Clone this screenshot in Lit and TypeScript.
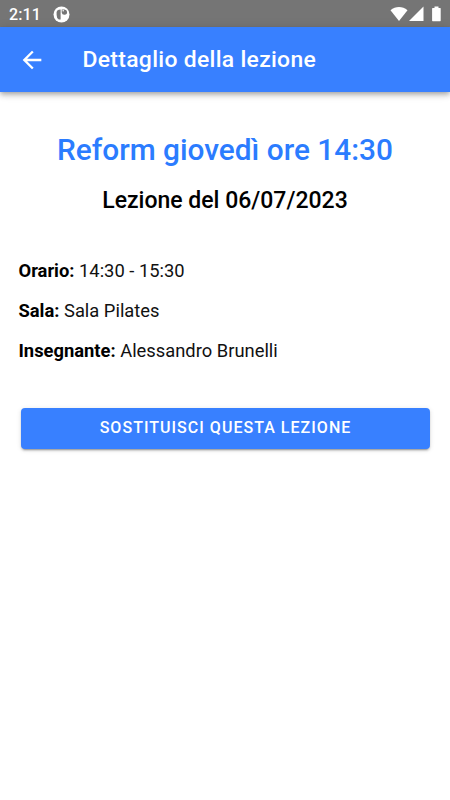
import { LitElement, html, css } from "lit";
import { customElement } from "lit/decorators.js";

@customElement("app-root")
export class AppRoot extends LitElement {
  static styles = css`
    :host { display: block; height: 800px; background: #fff; font-family: Roboto, sans-serif; color: #000; overflow: hidden; }
    * { box-sizing: border-box; }
    .status { height: 27px; background: #757575; color: #fff; display: flex; align-items: center; padding: 1px 8px 0 9px; }
    .clock { font-size: 16px; font-weight: 500; line-height: 20px; width: 44px; padding-top: 1px; letter-spacing: 0.1px; }
    .status svg { display: block; }
    .signals { margin-left: auto; display: flex; align-items: center; }
    .bar { height: 64.5px; background: #3880ff; color: #fff; display: flex; align-items: center; padding: 1px 0 0 18px; box-shadow: 0 2px 4px -1px rgba(0,0,0,.2), 0 4px 5px rgba(0,0,0,.14), 0 1px 10px rgba(0,0,0,.12); }
    .bar svg { display: block; }
    .title { margin: -1px 0 0 36.5px; font-size: 22.9px; font-weight: 500; letter-spacing: 0.31px; white-space: nowrap; }
    h1 { margin: 40px 0 0; text-align: center; font-size: 29.8px; line-height: 36px; font-weight: 500; color: #2b7cff; white-space: nowrap; }
    h2 { margin: 19px 0 0; text-align: center; font-size: 23px; line-height: 28px; font-weight: 500; white-space: nowrap; }
    .details { margin: 36.5px 18.5px 0; }
    .row { line-height: 40px; font-size: 18.35px; font-weight: 400; color: #111; white-space: nowrap; }
    .row b { font-weight: 700; color: #000; }
    .btn { display: block; width: 409px; height: 41px; margin: 37px 0 0 21px; padding: 0 0 2px; border: 0; border-radius: 4px; background: #3880ff; color: #fff; font: 500 16px Roboto, sans-serif; letter-spacing: 1.03px; text-transform: uppercase; box-shadow: 0 3px 1px -2px rgba(0,0,0,.2), 0 2px 2px rgba(0,0,0,.14), 0 1px 5px rgba(0,0,0,.12); }
  `;

  render() {
    return html`
      <div class="status">
        <span class="clock">2:11</span>
        <svg width="17" height="17" viewBox="0 0 17 17"><circle cx="8.5" cy="8.5" r="8" fill="#fff"/><path d="M7.6 3.4V13.6H5.8Q3.6 12.2 3.6 9V6.6Q3.6 3.4 7.6 3.4z" fill="#757575"/><path d="M8.7 3.4H11.3A2.7 2.7 0 1 1 8.7 6.4z" fill="#757575"/><circle cx="10.2" cy="4.7" r=".8" fill="#fff"/></svg>
        <span class="signals">
          <svg width="54" height="18" viewBox="0 0 54 18" fill="#fff"><path d="M2.5 5.2C7.5.9 14.5.9 19.5 5.2L11 16z"/><path d="M35.5 1.5V16H21z"/><path d="M44.7 3H46.5V1.5h4V3h1.8q.4 0 .4.5v12q0 .8-.6.8h-7.4q-.6 0-.6-.8v-12q0-.5.6-.5z"/></svg>
        </span>
      </div>
      <header class="bar">
        <svg width="28" height="28" viewBox="0 0 24 24" fill="#fff"><path d="M20 11H7.83l5.59-5.59L12 4l-8 8 8 8 1.41-1.41L7.83 13H20v-2z"/></svg>
        <span class="title">Dettaglio della lezione</span>
      </header>
      <main>
        <h1>Reform giovedì ore 14:30</h1>
        <h2>Lezione del 06/07/2023</h2>
        <div class="details">
          <div class="row"><b>Orario:</b> 14:30 - 15:30</div>
          <div class="row"><b>Sala:</b> Sala Pilates</div>
          <div class="row"><b>Insegnante:</b> Alessandro Brunelli</div>
        </div>
        <button class="btn">Sostituisci questa lezione</button>
      </main>
    `;
  }
}
